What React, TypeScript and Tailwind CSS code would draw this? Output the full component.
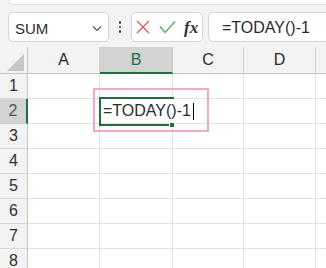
import React from 'react';

const cols = [
  { label: 'A', w: 'w-[72px]' },
  { label: 'B', w: 'w-[73px]' },
  { label: 'C', w: 'w-[71px]' },
  { label: 'D', w: 'w-[72px]' },
  { label: '', w: 'w-[72px]' },
];

const rows = [1, 2, 3, 4, 5, 6, 7, 8];

export default function App() {
  return (
    <div
      className="relative w-[326px] h-[268px] overflow-hidden bg-[#f3f3f3] text-[#2b2b2b]"
      style={{ fontFamily: '"Liberation Sans", Arial, sans-serif' }}
    >
      {/* ribbon edge */}
      <div className="ml-2 h-[5px] bg-white border-b border-l border-[#dcdcdc] rounded-bl-[6px]" />

      {/* formula bar */}
      <div className="mt-[7px] flex h-[30px] pl-2">
        <div className="flex w-[101px] shrink-0 items-center justify-between rounded-[5px] border border-[#d6d6d6] bg-white pl-[6px] pr-[6px]">
          <span className="text-[15px] leading-none pt-[2px]">SUM</span>
          <svg width="10" height="7" viewBox="0 0 10 7" className="mt-[3px]">
            <path d="M1 1.5 L5 5.5 L9 1.5" fill="none" stroke="#555" strokeWidth="1.2" />
          </svg>
        </div>

        <div className="flex w-[22px] shrink-0 flex-col items-center justify-center gap-[2px]">
          <span className="h-[2.5px] w-[2.5px] rounded-full bg-[#444]" />
          <span className="h-[2.5px] w-[2.5px] rounded-full bg-[#444]" />
          <span className="h-[2.5px] w-[2.5px] rounded-full bg-[#444]" />
        </div>

        <div className="flex w-[72px] shrink-0 items-center rounded-[5px] border border-[#d6d6d6] bg-white pl-[4px]">
          <svg width="14" height="14" viewBox="0 0 14 14">
            <path d="M1 1 L13 13 M13 1 L1 13" stroke="#e0555a" strokeWidth="1.3" fill="none" />
          </svg>
          <svg width="17" height="14" viewBox="0 0 17 14" className="ml-[9px]">
            <path d="M1 6.5 L6 12.5 L16 1.5" stroke="#5aa86a" strokeWidth="1.3" fill="none" />
          </svg>
          <span
            className="ml-[8px] text-[17px] italic font-bold leading-none text-[#333]"
            style={{ fontFamily: '"Liberation Serif", "Times New Roman", serif' }}
          >
            fx
          </span>
        </div>

        <div className="ml-[5px] flex w-[140px] shrink-0 items-center rounded-[5px] border border-[#d6d6d6] bg-white pl-[13px]">
          <span className="text-[16px] leading-none pt-[1px]">=TODAY()-1</span>
        </div>
      </div>

      {/* sheet */}
      <div className="mt-[5px]">
        <div className="flex h-[27px]">
          <div className="flex w-[28px] shrink-0 items-end justify-end border-r border-b border-[#c4c4c4] pb-[2px] pr-[3px]">
            <svg width="17" height="17" viewBox="0 0 17 17">
              <polygon points="17,0 17,17 0,17" fill="#c6c6c6" />
            </svg>
          </div>
          {cols.map((c) => {
            const sel = c.label === 'B';
            return (
              <div
                key={c.w + c.label}
                className={
                  sel
                    ? `${c.w} shrink-0 flex items-center justify-center border-r border-[#c8c8c8] border-b-2 border-b-[#1e6e42] bg-[#d3d3d3] text-[16px] text-[#1e6e42]`
                    : `${c.w} shrink-0 flex items-center justify-center border-r border-[#d4d4d4] border-b border-b-[#c4c4c4] text-[16px]`
                }
              >
                {c.label}
              </div>
            );
          })}
        </div>

        {rows.map((r) => {
          const sel = r === 2;
          return (
            <div key={r} className="flex h-[25px]">
              <div
                className={
                  sel
                    ? 'flex w-[28px] shrink-0 items-center justify-center border-b border-[#c8c8c8] border-r-2 border-r-[#1e6e42] bg-[#d3d3d3] text-[16px] text-[#3f5e4e]'
                    : 'flex w-[28px] shrink-0 items-center justify-center border-b border-[#d8d8d8] border-r border-r-[#c4c4c4] text-[16px] text-[#2f2f2f]'
                }
              >
                {r}
              </div>
              {cols.map((c) => (
                <div key={c.w + c.label} className={`${c.w} shrink-0 border-r border-b border-[#e1e1e1] bg-white`} />
              ))}
            </div>
          );
        })}
      </div>

      {/* active cell B2 in edit mode */}
      <div className="absolute left-[99px] top-[97px] h-[29px] w-[75px] border-2 border-[#1e6e42]" />
      <div className="absolute left-[101px] top-[99px] flex h-[24px] w-[96px] items-center bg-white pl-[2px]">
        <span className="text-[16px] leading-none">=TODAY()-1</span>
        <span className="ml-[2px] h-[17px] w-px bg-black" />
      </div>
      <div className="absolute left-[169px] top-[122px] h-[6px] w-[6px] border border-white bg-[#1e6e42]" />

      {/* highlight frame */}
      <div className="absolute left-[93px] top-[88px] h-[44px] w-[116px] border-[2.5px] border-[#f2a8c8]" />
    </div>
  );
}
